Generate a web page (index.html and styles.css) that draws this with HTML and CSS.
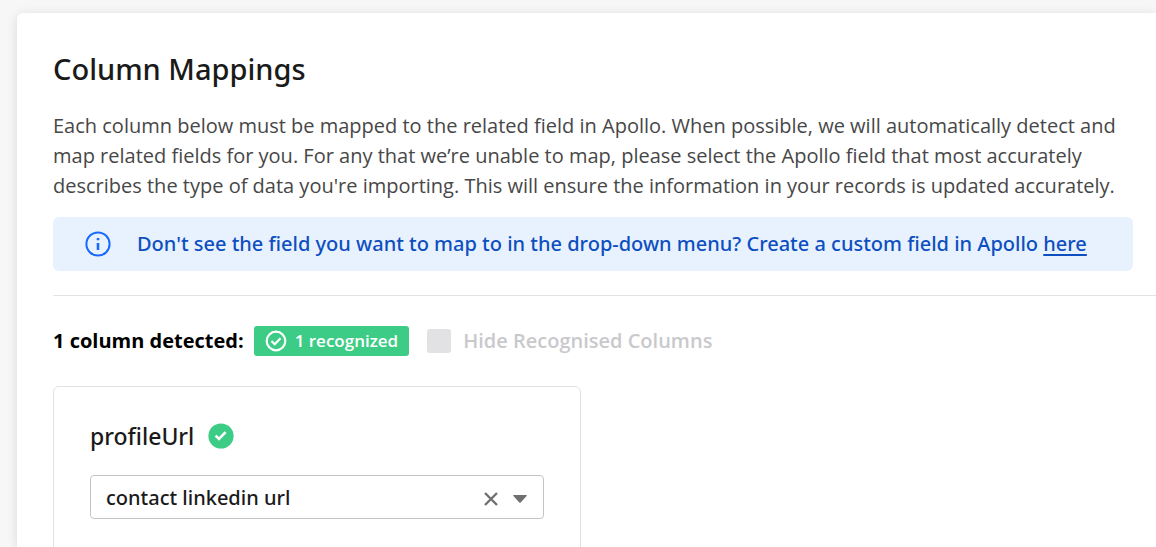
FILE: index.html
```html
<!DOCTYPE html>
<html lang="en">
<head>
  <meta charset="UTF-8" />
  <meta name="viewport" content="width=device-width, initial-scale=1.0"/>
  <title>Column Mappings</title>
  <link rel="stylesheet" href="styles.css">
</head>
<body>

  <main class="panel">
    <div class="intro">
      <h1>Column Mappings</h1>
      <p>Each column below must be mapped to the related field in Apollo. When possible, we will automatically detect and map related fields for you. For any that we’re unable to map, please select the Apollo field that most accurately describes the type of data you're importing. This will ensure the information in your records is updated accurately.</p>

      <div class="notice">
        <svg class="info-icon" viewBox="0 0 26 26" fill="none" stroke="currentColor" stroke-width="2">
          <circle cx="13" cy="13" r="11.6"/>
          <path d="M13 7v2.2M13 12v7" stroke-width="2.6"/>
        </svg>
        <div>Don't see the field you want to map to in the drop-down menu? Create a custom field in Apollo <a href="#">here</a></div>
      </div>
    </div>

    <div class="summary">
      <strong>1 column detected:</strong>
      <span class="badge">
        <svg class="badge-icon" viewBox="0 0 22 22" fill="none" stroke="currentColor" stroke-width="2.2">
          <circle cx="11" cy="11" r="9.3"/>
          <path d="M6.5 11l3.2 3.2 5.8-6"/>
        </svg>
        1 recognized
      </span>
      <label class="hide-toggle">
        <input type="checkbox" disabled>
        Hide Recognised Columns
      </label>
    </div>

    <section class="mapping">
      <div class="mapping-name">
        <label for="profileUrl">profileUrl</label>
        <svg class="check-icon" viewBox="0 0 26 26" fill="none">
          <circle cx="13" cy="13" r="12.6" fill="#3dcc85"/>
          <path d="M7.6 12.6l3.4 3.4 6.6-6.8" stroke="#fff" stroke-width="2.6"/>
        </svg>
      </div>
      <div class="select-box">
        <select id="profileUrl">
          <option>contact linkedin url</option>
        </select>
        <button class="clear" type="button" aria-label="Clear">
          <svg viewBox="0 0 14 14" stroke="currentColor" stroke-width="2.4">
            <path d="M1 1l12 12M13 1L1 13"/>
          </svg>
        </button>
        <svg class="caret" viewBox="0 0 14 8" fill="currentColor">
          <path d="M.8 0h12.4q1.2 0 .4 1L7.7 7.5q-.7.7-1.4 0L.4 1Q-.4 0 .8 0z"/>
        </svg>
      </div>
    </section>
  </main>

</body>
</html>
```

FILE: styles.css
```css
* { box-sizing: border-box; margin: 0; padding: 0; }

body {
  display: flex;
  flex-direction: column;
  height: 100vh;
  padding: 13px 0 0 17px;
  background: #f7f7f7;
  color: #1a1a1a;
  font-family: 'Segoe UI', 'Open Sans', sans-serif;
  font-size: 20px;
  line-height: 30px;
}

/* medium weight text */
h1, .notice, .mapping {
  font-family: 'Segoe UI', 'Noto Sans', sans-serif;
  font-weight: 500;
}

.panel {
  flex: 1;
  min-height: 0;
  overflow: hidden;
  padding: 36px 0 0 36px;
  background: #fff;
  border-radius: 6px 0 0 0;
  box-shadow: 0 2px 12px rgba(0,0,0,0.12);
}

.intro {
  padding: 0 23px 24px 0;
}

h1 {
  margin-bottom: 22px;
  font-size: 29px;
  line-height: 40px;
}

.intro p {
  margin-bottom: 16px;
  color: #474747;
}

.notice {
  display: flex;
  align-items: center;
  gap: 26px;
  padding: 12px 32px;
  background: #e8f2ff;
  border-radius: 6px;
  color: #0e4fc0;
}

.notice a {
  color: inherit;
  text-underline-offset: 3px;
  text-decoration-thickness: 2px;
}

.info-icon {
  flex: none;
  width: 26px;
  height: 26px;
  color: #1769ff;
}

.summary {
  display: flex;
  align-items: center;
  padding: 30px 0;
  border-top: 1px solid #e2e2e4;
}

.summary strong {
  color: #000;
}

.badge {
  display: flex;
  align-items: center;
  gap: 8px;
  margin: 0 18px 0 10px;
  padding: 0 11px;
  background: #3dcc85;
  border-radius: 3px;
  color: #fff;
  font-size: 17px;
  font-weight: 600;
}

.badge-icon {
  width: 22px;
  height: 22px;
}

.hide-toggle {
  display: flex;
  align-items: center;
  gap: 12px;
  color: #c9c9cc;
  font-weight: 600;
}

.hide-toggle input {
  appearance: none;
  width: 24px;
  height: 24px;
  background: #e2e2e5;
  border-radius: 3px;
}

.mapping {
  max-width: 528px;
  padding: 34px 36px 36px;
  border: 1px solid #e2e2e4;
  border-radius: 6px;
}

.mapping-name {
  display: flex;
  align-items: center;
  gap: 14px;
  margin-bottom: 24px;
  font-size: 23px;
}

.check-icon {
  width: 26px;
  height: 26px;
}

.select-box {
  position: relative;
  color: #707070;
}

.select-box select {
  appearance: none;
  display: block;
  width: 100%;
  height: 44px;
  padding: 2px 80px 0 15px;
  background: #fff;
  border: 1px solid #c4c4c8;
  border-radius: 4px;
  color: #1a1a1a;
  font: inherit;
}

/* clear and caret sit over the select */
.clear {
  position: absolute;
  top: 12px;
  right: 42px;
  width: 22px;
  height: 24px;
  padding: 5px 4px;
  background: none;
  border: 0;
  color: inherit;
  cursor: pointer;
}

.clear svg {
  display: block;
  width: 14px;
  height: 14px;
}

.caret {
  position: absolute;
  top: 20px;
  right: 17px;
  width: 14px;
  height: 8px;
  pointer-events: none;
}
```
